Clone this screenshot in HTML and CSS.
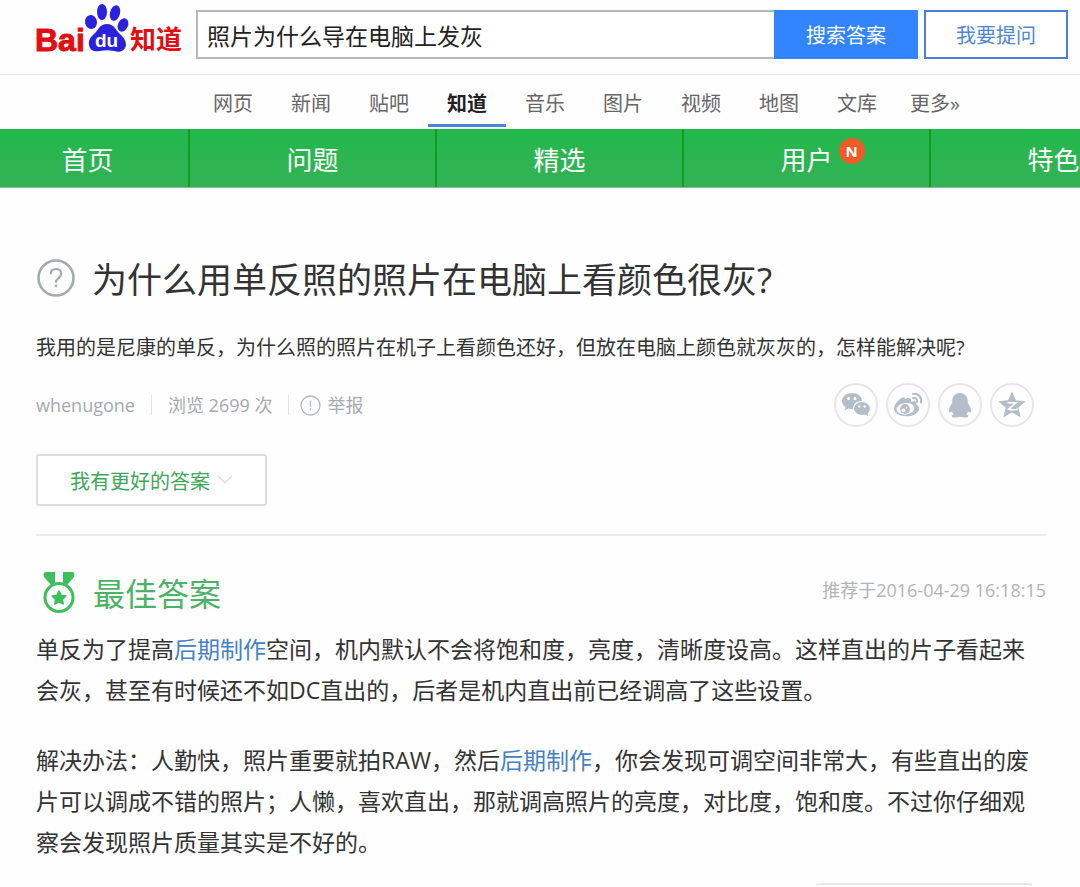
FILE: index.html
```html
<!DOCTYPE html>
<html lang="zh-CN">
<head>
  <meta charset="UTF-8">
  <title>为什么用单反照的照片在电脑上看颜色很灰?</title>
  <link rel="stylesheet" href="styles.css">
</head>
<body>

<header class="header">
  <a href="#" class="logo" aria-label="Baidu">
    <svg width="156" height="66" viewBox="0 0 156 66">
      <g fill="#2a22dc" transform="translate(19 0)">
        <ellipse cx="37" cy="22" rx="6" ry="7" transform="rotate(-12 37 22)"/>
        <ellipse cx="48" cy="12" rx="5" ry="8"/>
        <ellipse cx="61" cy="13" rx="5" ry="8" transform="rotate(14 61 13)"/>
        <ellipse cx="69" cy="25" rx="5" ry="7" transform="rotate(25 69 25)"/>
        <path d="M53 24c-6 0-8 4-11 8-4 4-8 7-7 13 1 6 6 7 11 6 5-1 9-1 14 0 6 2 11 0 12-6 0-6-4-9-8-13-3-4-5-8-11-8z"/>
      </g>
      <text class="logo-red" x="0" y="51" font-size="32" stroke="#e10f14" stroke-width="1">Bai</text>
      <text class="logo-du" x="60" y="47" font-size="19">du</text>
      <text class="logo-red" x="95" y="49" font-size="26">知道</text>
    </svg>
  </a>
  <form class="search" onsubmit="return false">
    <input type="text" class="search-input" aria-label="搜索" value="照片为什么导在电脑上发灰">
    <button class="search-btn">搜索答案</button>
    <button type="button" class="ask-btn">我要提问</button>
  </form>
</header>

<nav class="tabs">
  <a href="#">网页</a>
  <a href="#">新闻</a>
  <a href="#">贴吧</a>
  <a href="#" class="active">知道</a>
  <a href="#">音乐</a>
  <a href="#">图片</a>
  <a href="#">视频</a>
  <a href="#">地图</a>
  <a href="#">文库</a>
  <a href="#" class="more">更多»</a>
</nav>

<nav class="menu">
  <a href="#" class="home">首页</a>
  <a href="#">问题</a>
  <a href="#">精选</a>
  <a href="#"><span class="menu-label">用户<span class="badge">N</span></span></a>
  <a href="#">特色</a>
</nav>

<main class="content">
  <section class="question">
    <h1>
      <svg class="icon-question" width="40" height="40" viewBox="0 0 40 40" fill="none" stroke="#a4abad">
        <circle cx="20" cy="20" r="17.5" stroke-width="2.6"/>
        <path d="M14.8 16.2c0-3.4 2.2-5.2 5.2-5.2s5.2 1.8 5.2 4.8c0 2.6-1.6 3.6-3.2 4.8-1.4 1-2 1.8-2 3.6v.6" stroke-width="2.2"/>
        <path d="M20 26.6v2.6" stroke-width="2.4"/>
      </svg>
      为什么用单反照的照片在电脑上看颜色很灰?
    </h1>
    <p class="desc">我用的是尼康的单反，为什么照的照片在机子上看颜色还好，但放在电脑上颜色就灰灰的，怎样能解决呢?</p>

    <div class="meta">
      <a href="#" class="user">whenugone</a>
      <span class="views">浏览 2699 次</span>
      <a href="#" class="report">
        <svg width="21" height="21" viewBox="0 0 21 21" fill="none" stroke="#b4b9be" stroke-width="1.3">
          <circle cx="10.5" cy="10.5" r="9.5"/>
          <path d="M10.5 5.5v6.5M10.5 13.6v1.8"/>
        </svg>
        举报
      </a>
      <div class="share">
        <a href="#" aria-label="微信">
          <svg width="30" height="30" viewBox="0 0 30 30">
            <path fill="#b3bec9" d="M11 3C5.500 3 1 6.600 1 11c0 2.600 1.400 4.600 3.600 6l-.8 3.400 3.600-2c1.200.4 2.300.5 3.600.5 5.500 0 10-3.500 10-8S16.500 3 11 3z"/>
            <ellipse cx="21" cy="18.500" rx="8.600" ry="7" fill="#b3bec9" stroke="#fff" stroke-width="1.200"/>
            <path fill="#b3bec9" d="M23 24l4.200 2.200-.8-4z"/>
            <g fill="#fff">
              <circle cx="7.500" cy="8.500" r="1.500"/><circle cx="14" cy="8.500" r="1.500"/>
              <circle cx="18.400" cy="16.500" r="1.200"/><circle cx="23.600" cy="16.500" r="1.200"/>
            </g>
          </svg>
        </a>
        <a href="#" aria-label="微博">
          <svg width="30" height="30" viewBox="0 0 30 30">
            <path fill="#b3bec9" d="M12 9c2-1 4.500-1.500 5.600-.3.800.9.500 2 .2 3 2-.6 4.400-1 5.400.4.600.9.300 1.800-.1 2.700 2 .7 3 1.900 3 3.600 0 4.200-6 7.900-12.600 7.900C6.500 26.300 1 23.300 1 18.800c0-4.700 6.500-12.100 10-11.300 1 .3 1.300.8 1 1.500z"/>
            <ellipse cx="12.500" cy="18.800" rx="9" ry="5.800" fill="#fff" transform="rotate(-6 12.500 18.800)"/>
            <circle cx="12" cy="19" r="4.900" fill="#b3bec9"/>
            <circle cx="10.500" cy="20.300" r="1.900" fill="#fff"/>
            <circle cx="13.600" cy="17.800" r=".8" fill="#fff"/>
            <path fill="none" stroke="#b3bec9" stroke-width="2" stroke-linecap="round" d="M20 4c5-1 9 3 8 8.500M20 8c2.800-.5 4.500 1.300 4 4"/>
          </svg>
        </a>
        <a href="#" aria-label="QQ">
          <svg width="30" height="30" viewBox="0 0 30 30" fill="#b3bec9">
            <path d="M15 3c-5 0-7.800 3.700-7.800 8v2.200C5 16 4 18.600 4 21c0 2 .8 2.300 3 .6.400 1.200 1 2.200 1.800 3-1.400.4-2 1-2 1.900 0 .7 1 1 4 1 2 0 3.400-.3 4.200-.9.800.6 2.200.9 4.200.9 3 0 4-.3 4-1 0-.9-.6-1.500-2-1.900.8-.8 1.400-1.800 1.800-3 2.200 1.700 3 1.400 3-.6 0-2.400-1-5-3.200-7.800V11c0-4.300-2.800-8-7.800-8z"/>
          </svg>
        </a>
        <a href="#" aria-label="QQ空间">
          <svg width="30" height="30" viewBox="0 0 30 30">
            <path fill="#b3bec9" stroke="#b3bec9" stroke-linejoin="round" d="M15 2.500l3.600 8.300 9 .8-6.800 6 2.200 8.900-8-4.600-8 4.600 2.200-8.900-6.800-6 9-.8z"/>
            <path fill="none" stroke="#fff" stroke-width="1.500" d="M10.500 12.800h8.500l-7.500 6.400c3 .7 6 .7 9.500 0"/>
          </svg>
        </a>
      </div>
    </div>

    <button class="answer-btn">
      我有更好的答案
      <svg width="16" height="10" viewBox="0 0 16 10" fill="none" stroke="#dcdce0" stroke-width="1.5"><path d="M1 1l7 7 7-7"/></svg>
    </button>
  </section>

  <section class="answer">
    <div class="answer-head">
      <h2>
        <svg width="34" height="42" viewBox="0 0 34 42">
          <path fill="#3fbf5c" d="M4 1h9v12l-4 1-7-8c-1-3 0-5 2-5zM21 1h9c2 0 3 2 2 5l-7 8-4-1z"/>
          <circle cx="17" cy="26.500" r="14" fill="#fff" stroke="#3fbf5c" stroke-width="3"/>
          <path fill="#3fbf5c" stroke="#3fbf5c" stroke-linejoin="round" stroke-width="1.500" d="M17 20l2.100 4.300 4.800.7-3.500 3.400.8 4.700-4.200-2.200-4.200 2.200.8-4.700-3.500-3.400 4.800-.7z"/>
        </svg>
        最佳答案
      </h2>
      <span class="time">推荐于2016-04-29 16:18:15</span>
    </div>
    <p>单反为了提高<a href="#">后期制作</a>空间，机内默认不会将饱和度，亮度，清晰度设高。这样直出的片子看起来会灰，甚至有时候还不如DC直出的，后者是机内直出前已经调高了这些设置。</p>
    <p>解决办法：人勤快，照片重要就拍RAW，然后<a href="#">后期制作</a>，你会发现可调空间非常大，有些直出的废片可以调成不错的照片；人懒，喜欢直出，那就调高照片的亮度，对比度，饱和度。不过你仔细观察会发现照片质量其实是不好的。</p>
    <div class="vote-box"></div>
  </section>
</main>

</body>
</html>
```
FILE: styles.css
```css
* {
  box-sizing: border-box;
}

body {
  margin: 0;
  background: #fefefe;
  color: #333;
  font-family: "Open Sans", "Noto Sans CJK SC", sans-serif;
  font-size: 20px;
  overflow-x: hidden;
}

a {
  color: inherit;
  text-decoration: none;
}

input, button {
  font-family: inherit;
  margin: 0;
}

button {
  cursor: pointer;
}

/* header */
.header {
  display: flex;
  height: 75px;
  padding: 0 12px 0 35px;
  border-bottom: 1px solid #e8e8e8;
}

.logo {
  width: 161px;
}

.logo-red {
  fill: #e10f14;
  font-family: "Liberation Sans", "Noto Sans CJK SC", sans-serif;
  font-weight: bold;
}

.logo-du {
  fill: #fff;
  font-family: "Liberation Sans", sans-serif;
  font-weight: bold;
}

.search {
  display: flex;
  flex: 1;
  height: 49px;
  margin-top: 10px;
}

.search-input {
  flex: 1;
  min-width: 0;
  padding: 0 9px;
  border: 2px solid #b8b8b8;
  border-right: 0;
  background: #fff;
  color: #222;
  font-size: 23px;
}

.search-btn, .ask-btn {
  width: 144px;
  border: 2px solid #3385ff;
  background: #3385ff;
  color: #fff;
  font-size: 20px;
}

.ask-btn {
  margin-left: 6px;
  border-color: #4a7fd8;
  background: #fff;
  color: #4f86d2;
}

/* search tabs */
.tabs {
  display: flex;
  height: 54px;
  padding-left: 194px;
}

.tabs a {
  width: 78px;
  height: 52px;
  line-height: 57px;
  text-align: center;
  color: #666;
}

.tabs .active {
  border-bottom: 3px solid #4a86d8;
  color: #222;
  font-weight: bold;
}

/* green menu */
.menu {
  display: grid;
  grid-template-columns: 190px repeat(4, 247px);
  height: 59px;
  overflow: hidden;
  border-bottom: 1px solid #8fb598;
  background: linear-gradient(#22b84c, #34b255);
}

.menu a {
  border-right: 2px solid #0f9f1c;
  color: #fff;
  font-size: 26px;
  line-height: 62px;
  text-align: center;
}

.menu .home {
  padding-right: 13px;
}

.menu-label {
  position: relative;
}

.badge {
  position: absolute;
  top: -4px;
  right: -32px;
  width: 26px;
  height: 26px;
  border-radius: 50%;
  background: #ee5a28;
  font-size: 15px;
  font-weight: bold;
  line-height: 26px;
}

/* question */
.content {
  padding: 62px 34px 0 36px;
}

h1 {
  display: flex;
  align-items: center;
  gap: 16px;
  margin: 0;
  font-size: 35px;
  font-weight: normal;
  line-height: 60px;
}

.icon-question {
  margin-bottom: 4px;
}

.desc {
  margin: 22px 0 0;
  line-height: 32px;
}

.meta {
  display: flex;
  align-items: center;
  height: 44px;
  margin-top: 19px;
  color: #a5aaaf;
  font-size: 18px;
  line-height: 20px;
}

.user {
  padding-right: 16px;
  border-right: 1px solid #e2e2e6;
}

.views {
  padding: 0 16px;
  border-right: 1px solid #e2e2e6;
}

.report {
  display: flex;
  align-items: center;
  gap: 6px;
  padding-left: 11px;
}

.share {
  display: flex;
  gap: 8px;
  margin-left: auto;
  margin-right: 12px;
}

.share a {
  display: flex;
  align-items: center;
  justify-content: center;
  width: 44px;
  height: 44px;
  border: 2px solid #e8e4ea;
  border-radius: 50%;
}

.answer-btn {
  display: flex;
  align-items: center;
  justify-content: center;
  gap: 7px;
  width: 231px;
  height: 52px;
  margin-top: 27px;
  border: 2px solid #dedce0;
  border-radius: 3px;
  background: #fff;
  color: #3ea758;
  font-size: 20px;
}

/* best answer */
.answer {
  margin-top: 28px;
  border-top: 2px solid #ececee;
}

.answer-head {
  display: flex;
  justify-content: space-between;
  height: 93px;
  padding-top: 34px;
}

h2 {
  display: flex;
  align-items: center;
  gap: 17px;
  height: 44px;
  margin: 0;
  padding-left: 6px;
  color: #4cb267;
  font-size: 32px;
  font-weight: normal;
}

.time {
  color: #b0b4b8;
  font-size: 18px;
  line-height: 40px;
}

.answer p {
  margin: 0 0 29px;
  font-size: 23px;
  line-height: 41px;
}

.answer p a {
  color: #4480c4;
}

.vote-box {
  width: 216px;
  height: 3px;
  margin: -9px 14px 0 auto;
  border: 2px solid #e8e8ec;
  border-bottom: 0;
  border-radius: 3px 3px 0 0;
}
```
